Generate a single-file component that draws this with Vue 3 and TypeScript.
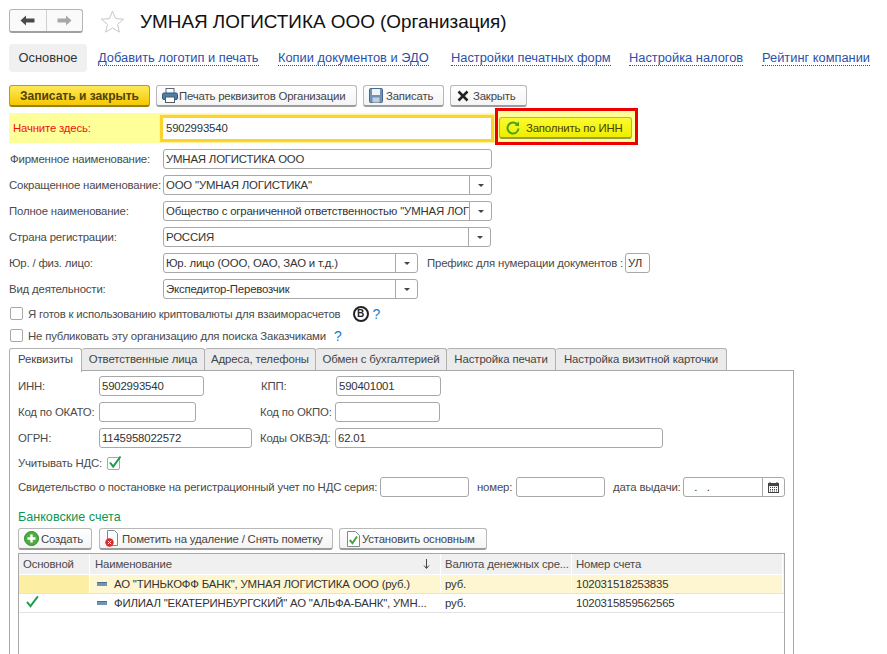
<script setup lang="ts">
const links = [
  { text: 'Добавить логотип и печать', width: 180 },
  { text: 'Копии документов и ЭДО', width: 173 },
  { text: 'Настройки печатных форм', width: 178 },
  { text: 'Настройка налогов', width: 133 },
  { text: 'Рейтинг компании', width: 110 },
];

const tabs = [
  { text: 'Реквизиты', width: 73 },
  { text: 'Ответственные лица', width: 123 },
  { text: 'Адреса, телефоны', width: 111 },
  { text: 'Обмен с бухгалтерией', width: 131 },
  { text: 'Настройка печати', width: 109 },
  { text: 'Настройка визитной карточки', width: 171 },
];

const mainRows = [
  { label: 'Сокращенное наименование:', value: 'ООО "УМНАЯ ЛОГИСТИКА"', width: 329 },
  { label: 'Полное наименование:', value: 'Общество с ограниченной ответственностью "УМНАЯ ЛОГИСТИКА"', width: 329 },
  { label: 'Страна регистрации:', value: 'РОССИЯ', width: 328 },
];
</script>

<template>
  <div class="page">
    <header class="title-row">
      <div class="nav-group">
        <button class="nav-btn">
          <svg width="15" height="11" viewBox="0 0 15 11"><path d="M0.5 5.5 6 0.5V3.5H14.5V7.5H6V10.5Z" fill="#4a4a4a" /></svg>
        </button>
        <button class="nav-btn">
          <svg width="15" height="11" viewBox="0 0 15 11"><path d="M14.5 5.5 9 0.5V3.5H0.5V7.5H9V10.5Z" fill="#a8a8a8" /></svg>
        </button>
      </div>
      <svg class="star" width="25" height="23" viewBox="0 0 25 23">
        <path d="M12.5 1.2 15.6 8.6 23.6 9.2 17.5 14.4 19.4 22.1 12.5 18 5.6 22.1 7.5 14.4 1.4 9.2 9.4 8.6Z" fill="#fff" stroke="#c4c8cc" />
      </svg>
      <h1 class="title">УМНАЯ ЛОГИСТИКА ООО (Организация)</h1>
    </header>

    <nav class="links-row">
      <span class="link-current">Основное</span>
      <span v-for="l in links" :key="l.text" class="link-cell" :style="{ width: l.width + 'px' }">
        <a class="link">{{ l.text }}</a>
      </span>
    </nav>

    <div class="toolbar">
      <button class="btn btn-default">Записать и закрыть</button>
      <button class="btn btn-print">
        <svg width="16" height="15" viewBox="0 0 16 15">
          <rect x="4" y="0.5" width="8" height="5" fill="#fff" stroke="#5a6a7a" />
          <rect x="0.5" y="5" width="15" height="6.5" rx="1.5" fill="#4d7fa8" stroke="#33566f" />
          <rect x="3.5" y="9" width="9" height="5.5" fill="#fff" stroke="#4d5c69" />
        </svg>
        Печать реквизитов Организации
      </button>
      <button class="btn btn-save">
        <svg width="14" height="15" viewBox="0 0 14 15">
          <rect x="0.5" y="0.5" width="13" height="14" rx="1" fill="#6f93b8" stroke="#46688c" />
          <rect x="3" y="1" width="8" height="6" fill="#eef3f8" />
          <rect x="3.5" y="9.5" width="7" height="5" fill="#c4ced8" />
        </svg>
        Записать
      </button>
      <button class="btn btn-close">
        <svg width="12" height="12" viewBox="0 0 12 12"><path d="M1.5 1.5 10.5 10.5M10.5 1.5 1.5 10.5" stroke="#222" stroke-width="2.6" /></svg>
        Закрыть
      </button>
    </div>

    <div class="start-row">
      <div class="start-fill">
        <span class="start-label">Начните здесь:</span>
        <div class="start-input">5902993540</div>
      </div>
      <div class="callout">
        <button class="btn btn-fill">
          <svg width="14" height="14" viewBox="0 0 14 14" fill="none">
            <path d="M11.6 4A5.5 5.5 0 1 0 12.5 7.5" stroke="#46a11c" stroke-width="2" />
            <path d="M8.5 4.6 13 5.2 13 0.6Z" fill="#46a11c" />
          </svg>
          Заполнить по ИНН
        </button>
      </div>
    </div>

    <div class="form-rows">
      <div class="form-row">
        <label class="form-label">Фирменное наименование:</label>
        <div class="field" style="width: 329px">УМНАЯ ЛОГИСТИКА ООО</div>
      </div>
      <div v-for="r in mainRows" :key="r.label" class="form-row">
        <label class="form-label form-label-tight">{{ r.label }}</label>
        <div class="field field-select" :style="{ width: r.width + 'px' }">
          <span class="field-text">{{ r.value }}</span>
          <span class="caret-box"><i class="caret"></i></span>
        </div>
      </div>
      <div class="form-row">
        <label class="form-label form-label-tight">Юр. / физ. лицо:</label>
        <div class="field field-select" style="width: 255px">
          <span class="field-text">Юр. лицо (ООО, ОАО, ЗАО и т.д.)</span>
          <span class="caret-box"><i class="caret"></i></span>
        </div>
        <label class="prefix-label">Префикс для нумерации документов :</label>
        <div class="field prefix-field">УЛ</div>
      </div>
      <div class="form-row">
        <label class="form-label form-label-tight">Вид деятельности:</label>
        <div class="field field-select" style="width: 255px">
          <span class="field-text">Экспедитор-Перевозчик</span>
          <span class="caret-box"><i class="caret"></i></span>
        </div>
      </div>
    </div>

    <div class="checks">
      <div class="check-row">
        <span class="checkbox"></span>
        <span>Я готов к использованию криптовалюты для взаиморасчетов</span>
        <span class="coin">B</span>
        <span class="hint hint-near">?</span>
      </div>
      <div class="check-row">
        <span class="checkbox"></span>
        <span>Не публиковать эту организацию для поиска Заказчиками</span>
        <span class="hint">?</span>
      </div>
    </div>

    <div class="tabs">
      <span
        v-for="(t, i) in tabs"
        :key="t.text"
        class="tab"
        :class="{ active: i === 0 }"
        :style="{ width: t.width + 'px' }"
      >{{ t.text }}</span>
    </div>

    <section class="panel">
      <div class="req-row">
        <label class="req-label">ИНН:</label>
        <div class="field" style="width: 105px">5902993540</div>
        <label class="req-label-2">КПП:</label>
        <div class="field" style="width: 105px">590401001</div>
      </div>
      <div class="req-row">
        <label class="req-label">Код по ОКАТО:</label>
        <div class="field" style="width: 97px"></div>
        <label class="req-label-2 req-offset-1">Код по ОКПО:</label>
        <div class="field" style="width: 105px"></div>
      </div>
      <div class="req-row">
        <label class="req-label">ОГРН:</label>
        <div class="field" style="width: 153px">1145958022572</div>
        <label class="req-label-2 req-offset-2">Коды ОКВЭД:</label>
        <div class="field" style="width: 328px">62.01</div>
      </div>
      <div class="vat-row">
        <span>Учитывать НДС:</span>
        <span class="checkbox checkbox-on">
          <svg width="15" height="15" viewBox="0 0 15 15" fill="none"><path d="M3 7.5 6.2 11.5 13.5 1.5" stroke="#1f9a4d" stroke-width="2" /></svg>
        </span>
      </div>
      <div class="cert-row">
        <label>Свидетельство о постановке на регистрационный учет по НДС серия:</label>
        <div class="field" style="width: 89px"></div>
        <label class="cert-num">номер:</label>
        <div class="field" style="width: 89px"></div>
        <label class="cert-date">дата выдачи:</label>
        <div class="field field-select" style="width: 102px">
          <span class="field-text date-text">&nbsp;&nbsp;.&nbsp;&nbsp;.</span>
          <span class="caret-box">
            <svg width="11" height="11" viewBox="0 0 11 11">
              <rect x="0.5" y="1.5" width="10" height="9" fill="#fff" stroke="#444" />
              <rect x="0.5" y="1.5" width="10" height="2.6" fill="#444" />
              <path d="M2 0V2M9 0V2" stroke="#444" />
              <path d="M2 5.5H9M2 7.5H9M2 9H9" stroke="#444" stroke-dasharray="1 1" />
            </svg>
          </span>
        </div>
      </div>

      <h2 class="bank-title">Банковские счета</h2>
      <div class="bank-toolbar">
        <button class="btn btn-create">
          <svg width="15" height="15" viewBox="0 0 15 15">
            <circle cx="7.5" cy="7.5" r="7" fill="#4caf3f" stroke="#2f8a2a" />
            <path d="M7.5 3.5V11.5M3.5 7.5H11.5" stroke="#fff" stroke-width="2.4" />
          </svg>
          Создать
        </button>
        <button class="btn btn-mark">
          <svg width="16" height="17" viewBox="0 0 16 17">
            <path d="M3.5 0.5H10.5L13.5 3.5V15.5H3.5Z" fill="#fff" stroke="#7d8a96" />
            <circle cx="5.5" cy="12.5" r="4.2" fill="#d62b2b" />
            <path d="M3.8 10.8 7.2 14.2M7.2 10.8 3.8 14.2" stroke="#fff" />
          </svg>
          Пометить на удаление / Снять пометку
        </button>
        <button class="btn btn-main">
          <svg width="15" height="16" viewBox="0 0 15 16" fill="none">
            <path d="M1.5 0.5H9.5L13.5 4.5V15.5H1.5Z" fill="#fff" stroke="#7d8a96" />
            <path d="M3.8 9 6.5 12.2 11 5.5" stroke="#3fa63c" stroke-width="2" />
          </svg>
          Установить основным
        </button>
      </div>

      <div class="table">
        <div class="table-row table-head">
          <div class="cell col-main">Основной</div>
          <div class="cell col-name head-name">
            <span>Наименование</span>
            <svg width="7" height="10" viewBox="0 0 7 10" fill="none"><path d="M3.5 0V9M1 6.5 3.5 9.5 6 6.5" stroke="#444" /></svg>
          </div>
          <div class="cell col-cur">Валюта денежных сре...</div>
          <div class="cell col-num">Номер счета</div>
        </div>
        <div class="table-row row-current">
          <div class="cell col-main cell-focus"></div>
          <div class="cell col-name"><i class="bar"></i>АО "ТИНЬКОФФ БАНК", УМНАЯ ЛОГИСТИКА ООО (руб.)</div>
          <div class="cell col-cur">руб.</div>
          <div class="cell col-num">102031518253835</div>
        </div>
        <div class="table-row">
          <div class="cell col-main">
            <svg class="main-check" width="13" height="13" viewBox="0 0 14 13" fill="none"><path d="M1 7 4.8 11.5 12.8 1" stroke="#1f9a4d" stroke-width="2" /></svg>
          </div>
          <div class="cell col-name"><i class="bar"></i>ФИЛИАЛ "ЕКАТЕРИНБУРГСКИЙ" АО "АЛЬФА-БАНК", УМН...</div>
          <div class="cell col-cur">руб.</div>
          <div class="cell col-num">1020315859562565</div>
        </div>
      </div>
    </section>
  </div>
</template>

<style>
html,
body {
  margin: 0;
  background: #fff;
}
</style>

<style scoped>
.page {
  width: 887px;
  height: 654px;
  overflow: hidden;
  box-sizing: border-box;
  padding: 9px 0 0 9px;
  font-family: "Liberation Sans", Arial, sans-serif;
  font-size: 11.4px;
  letter-spacing: -0.18px;
  color: #4a4a4a;
  background: #fff;
}

button {
  font: inherit;
  letter-spacing: inherit;
  color: inherit;
  padding: 0;
  margin: 0;
}

.title-row {
  display: flex;
  align-items: center;
  height: 24px;
}

.nav-group {
  display: flex;
  width: 74px;
  height: 24px;
  box-sizing: border-box;
  border: 1px solid #b4b4b4;
  border-bottom: 2px solid #a0a0a0;
  border-radius: 3px;
  background: #fafafa;
}

.nav-btn {
  flex: 1;
  border: 0;
  background: transparent;
  display: flex;
  align-items: center;
  justify-content: center;
}

.nav-btn + .nav-btn {
  border-left: 1px solid #d0d0d0;
}

.star {
  margin-left: 17px;
}

.title {
  margin: 1px 0 0 15px;
  font-size: 18.9px;
  font-weight: 400;
  letter-spacing: 0;
  color: #111;
  line-height: 24px;
  white-space: nowrap;
}

.links-row {
  display: flex;
  align-items: center;
  height: 28px;
  margin-top: 11px;
  font-size: 12.85px;
  letter-spacing: 0;
  white-space: nowrap;
}

.link-current {
  width: 78px;
  height: 28px;
  line-height: 28px;
  text-align: center;
  background: #f0f0f0;
  border-radius: 4px;
  color: #333;
  margin-right: 11px;
}

.link-cell {
  flex: none;
}

.link {
  color: #2b4fa8;
  border-bottom: 1px dotted #2b4fa8;
  line-height: 14px;
  display: inline-block;
}

.toolbar {
  display: flex;
  gap: 6px;
  margin-top: 13px;
}

.btn {
  height: 22px;
  box-sizing: border-box;
  display: flex;
  align-items: center;
  justify-content: flex-start;
  border: 1px solid #b8b8b8;
  border-bottom: 2px solid #9c9c9c;
  border-radius: 3px;
  background: linear-gradient(#ffffff, #f4f4f4);
  color: #444;
  white-space: nowrap;
  flex: none;
}

.btn-default {
  width: 141px;
  justify-content: center;
  font-size: 12px;
  font-weight: 700;
  letter-spacing: 0;
  color: #50430a;
  background: linear-gradient(#ffe95a, #f5c800);
  border-color: #b89a2a;
  border-bottom-color: #97801c;
}

.btn-print {
  width: 201px;
  padding-left: 5px;
  gap: 1px;
}

.btn-save {
  width: 81px;
  padding-left: 5px;
  gap: 3px;
}

.btn-close {
  width: 77px;
  padding-left: 6px;
  gap: 4px;
}

.start-row {
  display: flex;
  align-items: center;
  height: 30px;
  margin-top: 6px;
}

.start-fill {
  display: flex;
  align-items: center;
  width: 486px;
  height: 30px;
  background: #ffff99;
  padding-left: 4px;
  box-sizing: border-box;
}

.start-label {
  width: 147px;
  color: #f21010;
}

.start-input {
  width: 334px;
  height: 27px;
  box-sizing: border-box;
  border: 3px solid #fad32c;
  outline: 1px solid #fff3a0;
  background: #fff;
  padding-left: 3px;
  line-height: 21px;
  color: #333;
  flex: none;
}

.callout {
  width: 143px;
  height: 37px;
  box-sizing: border-box;
  margin-top: -5px;
  margin-bottom: -2px;
  border: 3px solid #ee0000;
  background: #ffff99;
  padding: 6px 0 0 1px;
  flex: none;
  position: relative;
}

.btn-fill {
  width: 133px;
  padding-left: 6px;
  gap: 6px;
  color: #4a4200;
  background: linear-gradient(#fbfb30, #eeee00);
  border-color: #b4b45a;
  border-bottom-color: #9a9a40;
}

.form-rows {
  display: flex;
  flex-direction: column;
  gap: 6px;
  margin-top: 6px;
}

.form-row {
  display: flex;
  align-items: center;
  height: 20px;
}

.form-label {
  width: 154px;
  padding-left: 1px;
  box-sizing: border-box;
  flex: none;
  white-space: nowrap;
}

.form-label-tight {
  padding-left: 0;
}

.field {
  height: 20px;
  box-sizing: border-box;
  border: 1px solid #a8a8a8;
  border-radius: 3px;
  background: #fff;
  padding-left: 2px;
  line-height: 18px;
  color: #333;
  flex: none;
  white-space: nowrap;
  overflow: hidden;
}

.field-select {
  display: flex;
  padding-right: 0;
}

.field-text {
  flex: 1;
  min-width: 0;
  overflow: hidden;
}

.caret-box {
  width: 21px;
  flex: none;
  border-left: 1px solid #a8a8a8;
  display: flex;
  align-items: center;
  justify-content: center;
}

.caret {
  width: 0;
  height: 0;
  border-left: 3px solid transparent;
  border-right: 3px solid transparent;
  border-top: 3px solid #444;
}

.prefix-label {
  margin-left: 9px;
  white-space: nowrap;
  width: 198px;
  flex: none;
}

.prefix-field {
  width: 25px;
}

.checks {
  margin-top: 5px;
  display: flex;
  flex-direction: column;
  gap: 3px;
}

.check-row {
  display: flex;
  align-items: center;
  height: 19px;
  padding-left: 1px;
  white-space: nowrap;
}

.checkbox {
  width: 13px;
  height: 13px;
  box-sizing: border-box;
  border: 1px solid #a8a8a8;
  border-radius: 2px;
  background: #fff;
  margin-right: 5px;
  flex: none;
  position: relative;
}

.checkbox-on {
  margin: 0 0 0 5px;
}

.checkbox-on svg {
  position: absolute;
  left: -1px;
  top: -3px;
}

.coin {
  width: 16px;
  height: 16px;
  box-sizing: border-box;
  border: 2px solid #222;
  border-radius: 50%;
  margin-left: 12px;
  font-size: 10px;
  line-height: 12px;
  font-weight: 700;
  letter-spacing: 0;
  text-align: center;
  color: #222;
}

.hint {
  color: #1480c8;
  font-size: 14px;
  font-weight: 400;
  letter-spacing: 0;
  margin-left: 8px;
}

.hint-near {
  margin-left: 4px;
}

.tabs {
  display: flex;
  margin-top: 3px;
  height: 23px;
  position: relative;
  letter-spacing: -0.1px;
}

.tab {
  box-sizing: border-box;
  height: 22px;
  line-height: 21px;
  text-align: center;
  border: 1px solid #b0b0b0;
  border-bottom: 0;
  border-left: 0;
  border-radius: 3px 3px 0 0;
  background: #ebebeb;
  color: #444;
  white-space: nowrap;
  flex: none;
}

.tab.active {
  background: #fff;
  height: 24px;
  border-left: 1px solid #b0b0b0;
  position: relative;
  z-index: 1;
}

.panel {
  width: 785px;
  height: 300px;
  box-sizing: border-box;
  margin-top: -1px;
  border: 1px solid #a8a8a8;
  border-bottom: 0;
  padding: 5px 0 0 8px;
}

.req-row {
  display: flex;
  align-items: center;
  height: 20px;
  margin-bottom: 6px;
}

.req-label {
  width: 81px;
  flex: none;
  white-space: nowrap;
}

.req-label-2 {
  width: 75px;
  margin-left: 57px;
  flex: none;
  white-space: nowrap;
}

.req-offset-1 {
  margin-left: 64px;
}

.req-offset-2 {
  margin-left: 8px;
}

.vat-row {
  display: flex;
  align-items: center;
  height: 18px;
  margin-top: 4px;
}

.cert-row {
  display: flex;
  align-items: center;
  height: 20px;
  margin-top: 5px;
  white-space: nowrap;
}

.cert-row > label:first-child {
  width: 362px;
  flex: none;
}

.cert-num {
  margin-left: 8px;
  width: 39px;
  flex: none;
}

.cert-date {
  margin-left: 8px;
  width: 70px;
  flex: none;
}

.date-text {
  letter-spacing: 1px;
}

.bank-title {
  margin: 12px 0 0;
  font-size: 12.6px;
  line-height: 16px;
  font-weight: 400;
  letter-spacing: 0;
  color: #0d9454;
}

.bank-toolbar {
  display: flex;
  gap: 6px;
  margin-top: 3px;
}

.btn-create {
  width: 74px;
  margin-right: 1px;
  padding-left: 5px;
  gap: 2px;
}

.btn-mark {
  width: 234px;
  padding-left: 4px;
  gap: 2px;
}

.btn-main {
  width: 148px;
  padding-left: 6px;
  gap: 1px;
}

.table {
  width: 767px;
  height: 110px;
  box-sizing: border-box;
  margin-top: 3px;
  border: 1px solid #a8a8a8;
  border-bottom: 0;
}

.table-row {
  display: flex;
  height: 19px;
  box-sizing: border-box;
  border-bottom: 1px solid #e3e3e3;
  line-height: 19px;
  color: #333;
}

.table-head {
  height: 21px;
  line-height: 20px;
  background: #f0f0f0;
  border-bottom: 1px solid #fff;
  color: #4a4a4a;
}

.cell {
  box-sizing: border-box;
  padding-left: 4px;
  white-space: nowrap;
  overflow: hidden;
  flex: none;
  border-right: 1px solid #fff;
}

.col-main {
  width: 71px;
}

.col-name {
  width: 351px;
  padding-left: 5px;
  display: flex;
  align-items: center;
}

.head-name {
  justify-content: space-between;
  padding-right: 10px;
}

.col-cur {
  width: 131px;
  padding-left: 4px;
}

.col-num {
  width: 211px;
  padding-left: 4px;
}

.row-current {
  background: #fdf6d0;
}

.cell-focus {
  background: #fcefa4;
}

.bar {
  width: 10px;
  height: 4px;
  background: #6f94b5;
  border-top: 1px solid #4d7092;
  box-sizing: border-box;
  margin: 0 7px 0 2px;
  flex: none;
}

.main-check {
  margin: 1px 0 0 3px;
}
</style>
